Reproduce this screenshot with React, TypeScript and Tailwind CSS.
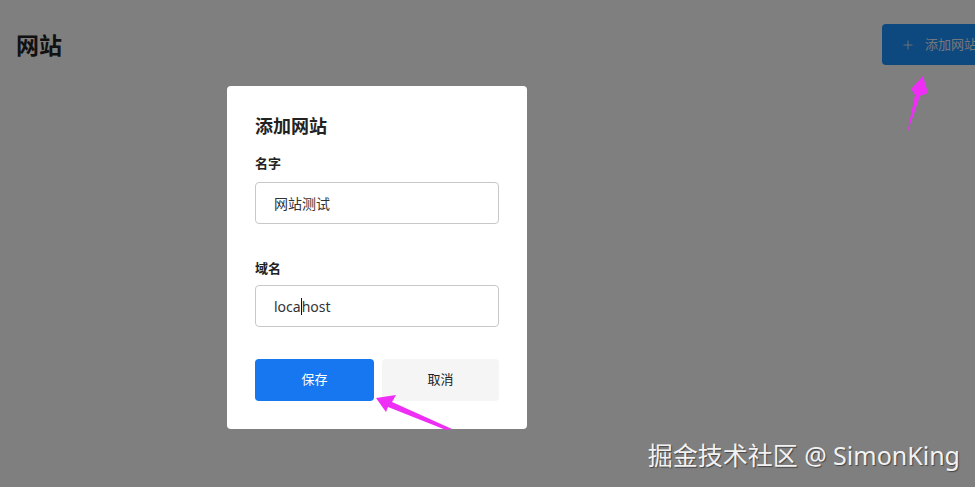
import { Plus } from "lucide-react";

const cjk = "font-['Noto_Sans','Noto_Sans_CJK_SC',sans-serif]";

export default function App() {
  return (
    <div className={`relative h-[487px] w-[975px] overflow-hidden bg-white ${cjk}`}>
      {/* Page header */}
      <header className="flex items-start justify-between">
        <h1 className="ml-4 mt-[30px] text-[23px] font-bold leading-[30px] text-[#222]">网站</h1>
        <button className="-mr-[27px] mt-6 flex h-[41px] w-[120px] shrink-0 items-center gap-[10px] rounded-[4px] bg-[#1a90ff] pl-[19px] text-[13px] text-[#e8eef6]">
          <Plus size={14} strokeWidth={1.5} />
          <span>添加网站</span>
        </button>
      </header>

      {/* Overlay + dialog */}
      <div className="absolute inset-0 bg-black/50 pl-[227px] pt-[86px]">
        <div className="w-[300px] rounded-[4px] bg-white p-7">
          <h2 className="text-[18px] font-bold leading-6 text-[#222]">添加网站</h2>

          <label className="mt-[15px] block text-[13px] font-bold leading-5 text-[#222]">名字</label>
          <div className="mt-[9px] flex h-[42px] items-center rounded-[4px] border border-[#c8c8c8] pl-[18px] text-[14px] text-[#333]">
            网站测试
          </div>

          <label className="mt-[34px] block text-[13px] font-bold leading-5 text-[#222]">域名</label>
          <div className="mt-[7px] flex h-[42px] items-center rounded-[4px] border border-[#c8c8c8] pl-[18px] text-[14px] text-[#333]">
            <span>loca</span>
            <span className="h-[17px] w-px bg-[#111]" />
            <span>host</span>
          </div>

          <div className="mt-8 flex gap-2">
            <button className="h-[42px] w-[119px] rounded-[4px] bg-[#1677f0] text-[13px] text-white">保存</button>
            <button className="h-[42px] w-[117px] rounded-[4px] bg-[#f5f5f5] text-[13px] text-[#222]">取消</button>
          </div>
        </div>
      </div>

      {/* Annotation arrows */}
      <svg className="pointer-events-none absolute inset-0" width="975" height="487" viewBox="0 0 975 487">
        <polygon
          points="907,134 915,95 911,89 923,76 928,93 920,96"
          fill="#ee2ef5"
        />
        <polygon
          points="376,398 396,395 392,402 452,429 446,430 388,407 386,412"
          fill="#ee2ef5"
        />
      </svg>

      {/* Watermark */}
      <div className="pointer-events-none absolute bottom-[16px] right-[15px] text-[25px] leading-8 text-[#f2f2f2] [text-shadow:1px_1px_1px_rgba(0,0,0,0.45)]">
        掘金技术社区 @ SimonKing
      </div>
    </div>
  );
}
